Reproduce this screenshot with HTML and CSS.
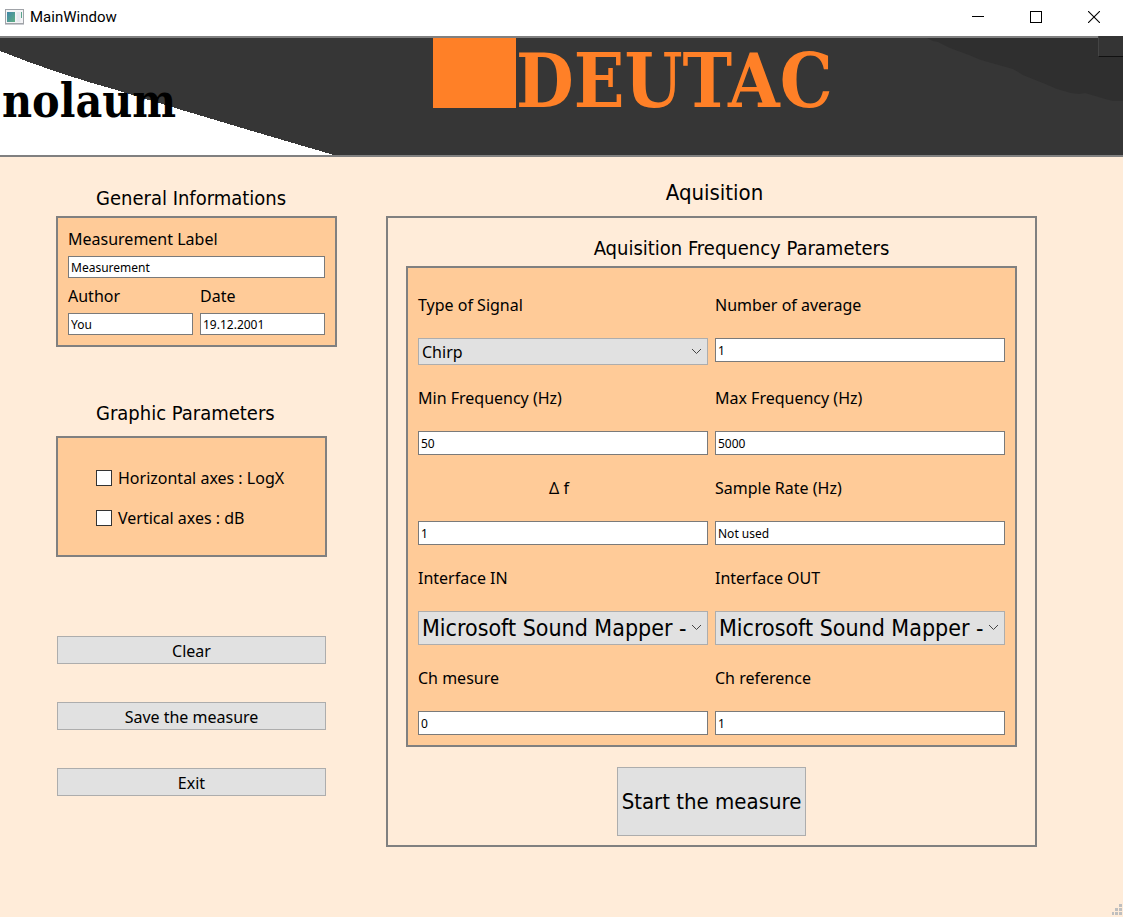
FILE: index.html
```html
<!DOCTYPE html>
<html lang="en">
<head>
<meta charset="utf-8">
<title>MainWindow</title>
<link rel="stylesheet" href="styles.css">
</head>
<body>
<div class="window">
  <header class="titlebar">
    <svg class="app-icon" width="19" height="16" viewBox="0 0 19 16" aria-hidden="true">
      <defs><linearGradient id="screen" x1="0" y1="0" x2="1" y2="1"><stop offset="0" stop-color="#3f86a8"/><stop offset="1" stop-color="#5fae83"/></linearGradient></defs>
      <rect x="0.5" y="0.5" width="18" height="14" fill="#f4f4f6" stroke="#a0a3a8"/>
      <path d="M0 15.5h19" stroke="#c9cbd0"/>
      <rect x="2" y="3" width="8" height="10" fill="url(#screen)"/>
      <rect x="11.500" y="3" width="4" height="10" fill="#e6e8ee"/>
      <rect x="16" y="3" width="1" height="6" fill="#58a58c"/>
    </svg>
    <h1 class="window-title">MainWindow</h1>
    <div class="window-controls">
      <button class="window-button" type="button" aria-label="Minimize"><svg width="12" height="12" viewBox="0 0 12 12"><path d="M0 5.500h12" stroke="#000"/></svg></button>
      <button class="window-button" type="button" aria-label="Maximize"><svg width="12" height="12" viewBox="0 0 12 12"><rect x="0.5" y="0.5" width="11" height="11" fill="none" stroke="#000"/></svg></button>
      <button class="window-button" type="button" aria-label="Close"><svg width="12" height="12" viewBox="0 0 12 12"><path d="M0 0l12 12M12 0L0 12" stroke="#000" stroke-width="1.100"/></svg></button>
    </div>
  </header>

  <div class="banner">
    <svg class="banner-art banner-left" width="334" height="117" viewBox="0 0 334 117" aria-hidden="true"><path d="M0 13Q58 36 113 51Q220 84 334 117H0z" fill="#fff" shape-rendering="crispEdges"/></svg>
    <svg class="banner-art banner-right" width="196" height="63" viewBox="0 0 196 63" aria-hidden="true"><path d="M0 0l6 3 5 1 12 6 19 7 12 5 32 9 10 6 20 8 14 6 14 4 8 1 6-1 24 7 8 2 6 1V0z" fill="#2f2f2f"/></svg>
    <span class="wordmark">nolaum</span>
    <span class="brand-block"></span>
    <span class="brand">DEUTAC</span>
    <button class="corner-button" type="button" aria-label="Options"></button>
  </div>

  <main class="content">
    <div class="sidebar">
      <section class="group general">
        <h2 class="group-title">General Informations</h2>
        <div class="panel general-panel">
          <div class="field wide"><label for="label">Measurement Label</label><input class="textbox" id="label" type="text" value="Measurement"></div>
          <div class="field"><label for="author">Author</label><input class="textbox" id="author" type="text" value="You"></div>
          <div class="field"><label for="date">Date</label><input class="textbox" id="date" type="text" value="19.12.2001"></div>
        </div>
      </section>
      <section class="group graphic">
        <h2 class="group-title">Graphic Parameters</h2>
        <div class="panel graphic-panel">
          <label class="check"><input type="checkbox">Horizontal axes : LogX</label>
          <label class="check"><input type="checkbox">Vertical axes : dB</label>
        </div>
      </section>
      <div class="actions">
        <button class="button" type="button">Clear</button>
        <button class="button" type="button">Save the measure</button>
        <button class="button" type="button">Exit</button>
      </div>
    </div>

    <section class="acquisition">
      <h2 class="section-title">Aquisition</h2>
      <div class="frame">
        <h3 class="group-title centered">Aquisition Frequency Parameters</h3>
        <div class="panel parameters">
          <label class="cell-label" for="signal">Type of Signal</label>
          <label class="cell-label" for="average">Number of average</label>
          <div class="combo"><select id="signal"><option>Chirp</option></select><svg class="chevron" width="9" height="5" viewBox="0 0 9 5"><path d="M0 0l4.500 4.500L9 0" fill="none" stroke="#444"/></svg></div>
          <input class="textbox tall" id="average" type="text" value="1">

          <label class="cell-label" for="min">Min Frequency (Hz)</label>
          <label class="cell-label" for="max">Max Frequency (Hz)</label>
          <input class="textbox tall" id="min" type="text" value="50">
          <input class="textbox tall" id="max" type="text" value="5000">

          <label class="cell-label middle" for="delta">Δ f</label>
          <label class="cell-label" for="rate">Sample Rate (Hz)</label>
          <input class="textbox tall" id="delta" type="text" value="1">
          <input class="textbox tall" id="rate" type="text" value="Not used">

          <label class="cell-label" for="in">Interface IN</label>
          <label class="cell-label" for="out">Interface OUT</label>
          <div class="combo large"><select id="in"><option>Microsoft Sound Mapper -</option></select><svg class="chevron" width="9" height="5" viewBox="0 0 9 5"><path d="M0 0l4.500 4.500L9 0" fill="none" stroke="#444"/></svg></div>
          <div class="combo large"><select id="out"><option>Microsoft Sound Mapper -</option></select><svg class="chevron" width="9" height="5" viewBox="0 0 9 5"><path d="M0 0l4.500 4.500L9 0" fill="none" stroke="#444"/></svg></div>

          <label class="cell-label" for="mesure">Ch mesure</label>
          <label class="cell-label" for="reference">Ch reference</label>
          <input class="textbox tall" id="mesure" type="text" value="0">
          <input class="textbox tall" id="reference" type="text" value="1">
        </div>
        <button class="button start" type="button">Start the measure</button>
      </div>
    </section>
  </main>
  <svg class="grip" width="11" height="11" viewBox="0 0 11 11" aria-hidden="true"><path d="M8 0h3v3H8zM4 4h3v3H4zM8 4h3v3H8zM1 8h2v3H1zM4 8h3v3H4zM8 8h3v3H8z" fill="#bfbfbf"/></svg>
</div>
</body>
</html>
```
FILE: styles.css
```css
* { box-sizing: border-box; }

body {
  margin: 0;
  background: #ffecd9;
  color: #000;
  font-family: "Noto Sans", sans-serif;
  font-size: 16px;
}

h1, h2, h3 { margin: 0; font-weight: 400; }

button, input, select { font-family: inherit; color: inherit; margin: 0; }

.group-title, .section-title, .large, .button.start {
  font-family: "DejaVu Sans Condensed", "DejaVu Sans", sans-serif;
}

.window {
  position: relative;
  min-height: 100vh;
}

.titlebar {
  display: flex;
  align-items: center;
  height: 36px;
  padding: 0 0 2px 5px;
  background: #fff;
}

.window-title {
  margin-left: 6px;
  font-family: Roboto, sans-serif;
  font-size: 15px;
}

.window-controls {
  display: flex;
  margin-left: auto;
}

.window-button {
  display: flex;
  align-items: center;
  justify-content: center;
  width: 58px;
  height: 34px;
  padding: 0;
  border: 0;
  background: none;
}

.banner {
  position: relative;
  display: flex;
  height: 121px;
  border: solid #808080;
  border-width: 2px 0;
  background: #363636;
  font-family: "DejaVu Serif Condensed", "DejaVu Serif", serif;
  font-weight: 700;
}

.banner-art { position: absolute; top: 0; }
.banner-left { left: 0; }
.banner-right { right: 0; }

.wordmark {
  position: relative;
  flex: 0 0 433px;
  padding-left: 2px;
  font-size: 46px;
  line-height: 126px;
}

.brand-block {
  width: 83px;
  height: 70px;
  background: #ff8027;
}

.brand {
  color: #ff8027;
  font-size: 74px;
  line-height: 86px;
}

.corner-button {
  position: absolute;
  top: -2px;
  right: 0;
  width: 25px;
  height: 21px;
  padding: 0;
  border: solid #444;
  border-width: 0 0 1px 1px;
  border-bottom-color: #111;
  background: #343434;
}

.content {
  display: grid;
  grid-template-columns: 281px 1fr;
  gap: 49px;
  padding: 16px 86px 70px 56px;
}

.group-title {
  height: 38px;
  padding-left: 40px;
  font-size: 20px;
  line-height: 40px;
}

.group-title.centered {
  padding-left: 60px;
  text-align: center;
}

.panel {
  border: 2px solid #808080;
  background: #ffcb98;
}

.general { padding-top: 5px; }

.general-panel {
  display: grid;
  grid-template-columns: 1fr 1fr;
  gap: 7px;
  padding: 10px;
}

.field {
  display: grid;
  gap: 7px;
}

.field label {
  height: 21px;
  line-height: 23px;
}

.wide { grid-column: 1 / -1; }

.textbox {
  width: 100%;
  height: 22px;
  padding: 0 2px;
  border: 1px solid #7a7a7a;
  border-radius: 0;
  background: #fff;
  font-size: 12px;
}

.tall { height: 24px; }

.graphic {
  width: 271px;
  margin-top: 46px;
}

.graphic .group-title { margin-bottom: 5px; }

.graphic-panel {
  display: grid;
  gap: 18px;
  padding: 29px 38px 26px;
}

.check {
  display: flex;
  align-items: center;
  gap: 6px;
  height: 22px;
  line-height: 24px;
  white-space: nowrap;
}

.check input {
  appearance: none;
  flex: none;
  width: 16px;
  height: 16px;
  border: 1px solid #333;
  background: #fff;
}

.actions {
  display: grid;
  gap: 38px;
  width: 269px;
  margin: 79px 0 0 1px;
}

.button {
  height: 28px;
  padding: 1px 0 0;
  border: 1px solid #adadad;
  background: #e1e1e1;
  font-size: 16px;
  line-height: 24px;
}

.section-title {
  height: 43px;
  padding-left: 6px;
  font-size: 22px;
  line-height: 40px;
  text-align: center;
}

.frame {
  display: flex;
  flex-direction: column;
  padding: 10px 18px 9px;
  border: 2px solid #808080;
}

.parameters {
  display: grid;
  grid-template-columns: 1fr 1fr;
  gap: 7px;
  padding: 11px 10px 10px;
}

.cell-label { line-height: 52px; }

.middle {
  padding-right: 8px;
  text-align: center;
}

.combo {
  position: relative;
  height: 27px;
}

.combo.large {
  height: 34px;
  font-size: 23px;
}

.combo select {
  appearance: none;
  width: 100%;
  height: 100%;
  padding: 0 20px 0 3px;
  border: 1px solid #adadad;
  border-radius: 0;
  background: #e1e1e1;
  font-size: inherit;
}

.chevron {
  position: absolute;
  top: calc(50% - 3px);
  right: 7px;
  pointer-events: none;
}

.start {
  align-self: center;
  height: 69px;
  min-width: 189px;
  margin-top: 20px;
  font-size: 22px;
}

.grip {
  position: absolute;
  right: 1px;
  bottom: 2px;
}
```
